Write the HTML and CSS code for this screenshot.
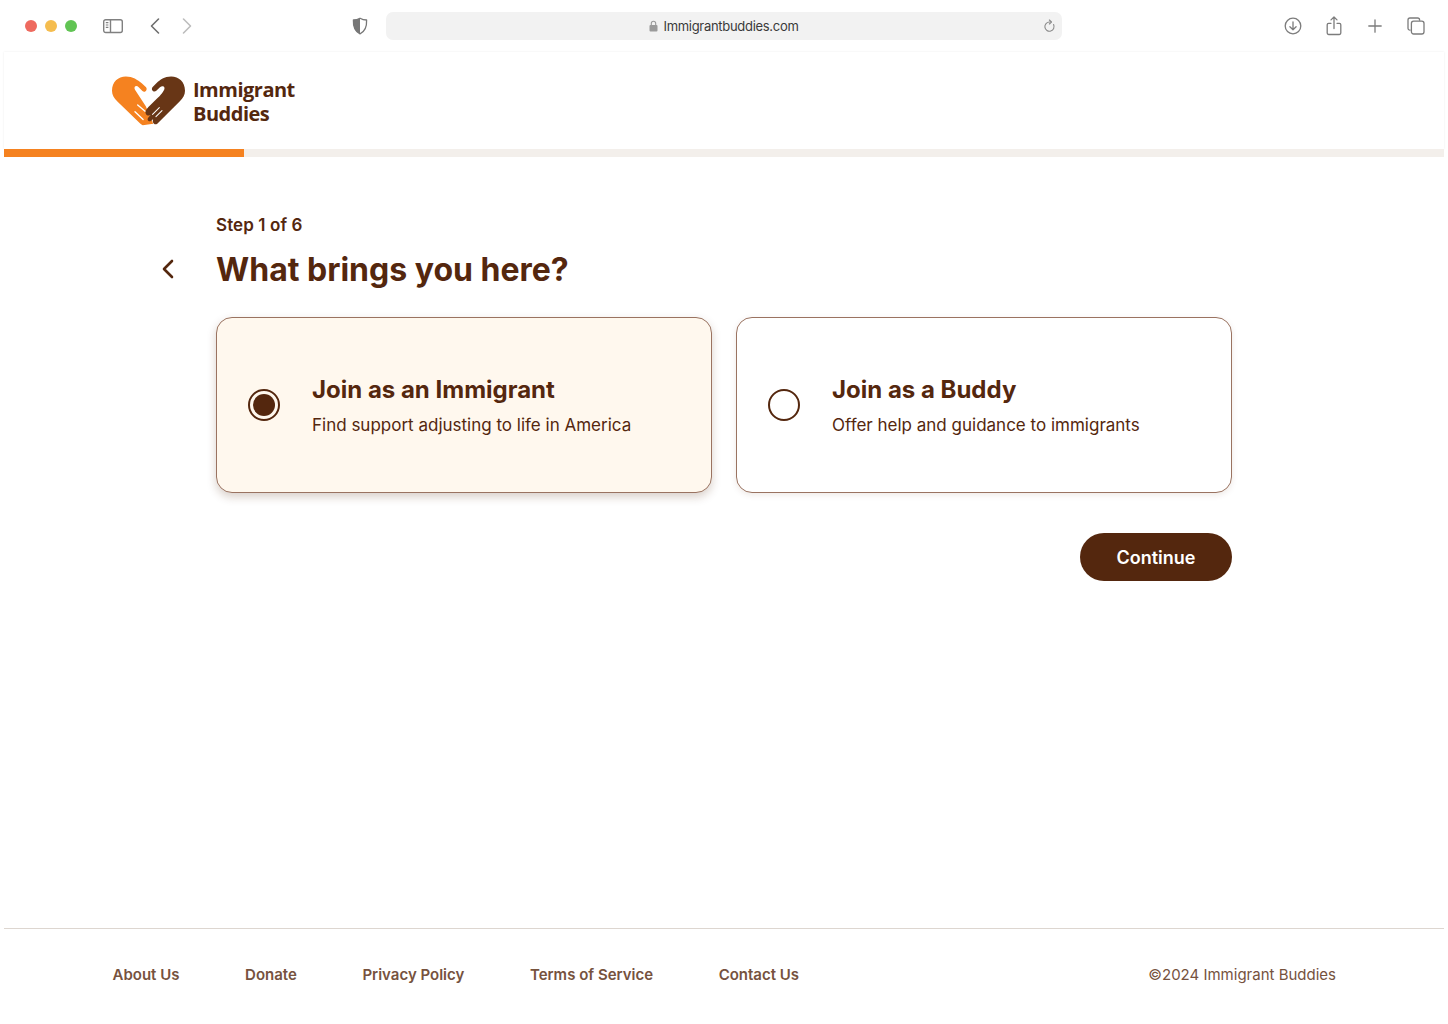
FILE: index.html
```html
<!DOCTYPE html>
<html lang="en">
<head>
  <meta charset="UTF-8">
  <title>Immigrant Buddies</title>
  <link rel="stylesheet" href="styles.css">
</head>
<body>

  <div class="browser-bar">
    <div class="traffic">
      <span class="dot dot-red"></span>
      <span class="dot dot-yellow"></span>
      <span class="dot dot-green"></span>
    </div>
    <svg class="ico ico-sidebar" width="22" height="16" viewBox="0 0 22 16" fill="none" stroke="#808080" stroke-width="1.4">
      <rect x="1.7" y="1.7" width="18.6" height="12.8" rx="2"/>
      <path d="M8.5 1.7v12.8"/>
      <path d="M3.8 4.6h2.6M3.8 7h2.6M3.8 9.4h2.6" stroke-width="1.1"/>
    </svg>
    <svg class="ico ico-back" width="12" height="18" viewBox="0 0 12 18" fill="none" stroke="#6e6e6e" stroke-width="1.6" stroke-linecap="round" stroke-linejoin="round">
      <path d="M9.5 2 L2.5 9 L9.5 16"/>
    </svg>
    <svg class="ico ico-forward" width="12" height="18" viewBox="0 0 12 18" fill="none" stroke="#bdbdbd" stroke-width="1.6" stroke-linecap="round" stroke-linejoin="round">
      <path d="M2.5 2 L9.5 9 L2.5 16"/>
    </svg>
    <svg class="ico ico-shield" width="16" height="18" viewBox="0 0 16 18">
      <path d="M8 1.2 C10 2.4 12.4 3 14.6 3 C14.9 9.5 13 14.5 8 16.8 C3 14.5 1.1 9.5 1.4 3 C3.6 3 6 2.4 8 1.2Z" fill="#fff" stroke="#777" stroke-width="1.3" stroke-linejoin="round"/>
      <path d="M8 1.2 C6 2.4 3.6 3 1.4 3 C1.1 9.5 3 14.5 8 16.8Z" fill="#777"/>
    </svg>
    <div class="url-bar">
      <svg class="url-lock" width="9" height="12" viewBox="0 0 9 12">
        <path d="M2.3 5V3.4a2.2 2.2 0 0 1 4.4 0V5" fill="none" stroke="#9a9a9a" stroke-width="1.1"/>
        <rect x="0.5" y="5" width="8" height="6.5" rx="1" fill="#9a9a9a"/>
      </svg>
      <span class="url-text">Immigrantbuddies.com</span>
      <svg class="url-reload" width="12" height="14" viewBox="0 0 12 14" fill="none" stroke="#8a8a8a" stroke-width="1.1" stroke-linecap="round" stroke-linejoin="round">
        <path d="M9.6 5.6 A4.6 4.6 0 1 1 5.6 3 H7.2"/>
        <path d="M5.4 1 L7.4 3 L5.4 5"/>
      </svg>
    </div>
    <div class="bar-actions">
      <span class="bar-btn">
        <svg width="18" height="18" viewBox="0 0 18 18" fill="none" stroke="#7c7c7c" stroke-width="1.3" stroke-linecap="round" stroke-linejoin="round">
          <circle cx="9" cy="9" r="7.8"/>
          <path d="M9 4.8v8M5.9 9.8 L9 12.8 L12.1 9.8"/>
        </svg>
      </span>
      <span class="bar-btn">
        <svg width="16" height="20" viewBox="0 0 16 20" fill="none" stroke="#7c7c7c" stroke-width="1.3" stroke-linecap="round" stroke-linejoin="round">
          <path d="M5 7.3H2.6a1.4 1.4 0 0 0-1.4 1.4v8.4a1.4 1.4 0 0 0 1.4 1.4h10.8a1.4 1.4 0 0 0 1.4-1.4V8.7a1.4 1.4 0 0 0-1.4-1.4H11"/>
          <path d="M8 12.5V1.2M5 3.9 L8 1 L11 3.9"/>
        </svg>
      </span>
      <span class="bar-btn">
        <svg width="14" height="14" viewBox="0 0 14 14" fill="none" stroke="#7c7c7c" stroke-width="1.3" stroke-linecap="round">
          <path d="M7 .8v12.4M.8 7h12.4"/>
        </svg>
      </span>
      <span class="bar-btn">
        <svg width="18" height="18" viewBox="0 0 18 18" fill="none" stroke="#7c7c7c" stroke-width="1.3" stroke-linejoin="round">
          <path d="M3.6 13.2H3a2 2 0 0 1-2-2V3a2 2 0 0 1 2-2h7.6a2 2 0 0 1 2 2v.7"/>
          <rect x="4.4" y="4.2" width="12.6" height="12.8" rx="2.2"/>
        </svg>
      </span>
    </div>
  </div>

  <div class="page">
    <header class="site-header">
      <div class="logo">
        <svg class="logo-mark" width="73" height="50" viewBox="36 35 216 147">
          <path d="M36 78 C36 52 54 36 77 36 C97 36 112 46 124 56 L136 67 C143 74 134 86 126 79 L115 68 C108 60 99 66 104 75 L136 124 L158 176 L127 180 C124 179 120 176 117 173 L52 110 C42 100 36 90 36 78Z" fill="#f58220"/>
          <path d="M112 120 L134 139 M104 140 L128 163" stroke="#fff" stroke-width="4" stroke-linecap="round" fill="none"/>
          <path d="M252 78 C252 52 234 36 211 36 C191 36 178 46 168 55 L157 66 C149 74 159 85 167 78 L178 68 C186 61 195 67 190 76 C186 84 176 96 170 100 L146 124 C140 130 133 139 136 146 C138 152 146 153 150 150 L143 158 C138 165 146 172 152 167 L158 162 C154 170 160 182 170 176 L236 110 C246 100 252 90 252 78Z" fill="#683616"/>
          <path d="M176 128 L156 148 M184 137 L166 155" stroke="#fff" stroke-width="3" stroke-linecap="round" fill="none"/>
        </svg>
        <div class="logo-text">Immigrant<br>Buddies</div>
      </div>
    </header>
    <div class="progress"><div class="progress-fill"></div></div>

    <main class="content">
      <p class="step">Step 1 of 6</p>
      <div class="title-row">
        <a class="back" href="#" aria-label="Back">
          <svg width="12" height="20" viewBox="0 0 12 20" fill="none" stroke="#54270e" stroke-width="2.6" stroke-linecap="round" stroke-linejoin="round">
            <path d="M10 2 L2 10 L10 18"/>
          </svg>
        </a>
        <h1>What brings you here?</h1>
      </div>

      <div class="options">
        <label class="option option-selected">
          <span class="radio radio-on"></span>
          <span class="option-text">
            <span class="option-title">Join as an Immigrant</span>
            <span class="option-sub">Find support adjusting to life in America</span>
          </span>
        </label>
        <label class="option">
          <span class="radio"></span>
          <span class="option-text">
            <span class="option-title">Join as a Buddy</span>
            <span class="option-sub">Offer help and guidance to immigrants</span>
          </span>
        </label>
      </div>

      <div class="actions">
        <button class="continue">Continue</button>
      </div>
    </main>

    <footer class="site-footer">
      <nav class="footer-links">
        <a href="#">About Us</a>
        <a href="#">Donate</a>
        <a href="#">Privacy Policy</a>
        <a href="#">Terms of Service</a>
        <a href="#">Contact Us</a>
      </nav>
      <span class="copyright">©2024 Immigrant Buddies</span>
    </footer>
  </div>

</body>
</html>
```

FILE: styles.css
```css
* {
  box-sizing: border-box;
}

body {
  margin: 0;
  height: 1024px;
  overflow: hidden;
  background-color: #fff;
  color: #54270e;
  font-family: Inter, sans-serif;
  display: flex;
  flex-direction: column;
}

/* browser chrome */
.browser-bar {
  height: 52px;
  flex: none;
  display: flex;
  align-items: center;
  padding-left: 25px;
}

.traffic {
  display: flex;
  gap: 8px;
  width: 77px;
}

.dot {
  width: 12px;
  height: 12px;
  border-radius: 50%;
}

.dot-red { background-color: #ee6a5f; }
.dot-yellow { background-color: #f5bd4f; }
.dot-green { background-color: #61c454; }

.ico {
  flex: none;
}

.ico-back { margin-left: 25px; }
.ico-forward { margin-left: 20px; }
.ico-shield { margin-left: 159px; }

.url-bar {
  width: 676px;
  height: 28px;
  margin-left: 18px;
  border-radius: 7px;
  background-color: #f2f2f2;
  display: flex;
  align-items: center;
  justify-content: center;
  gap: 5px;
  position: relative;
  font-size: 13px;
  letter-spacing: -0.3px;
  color: #3a3a3a;
}

.url-reload {
  position: absolute;
  right: 6px;
  top: 7px;
}

.bar-actions {
  display: flex;
  align-items: center;
  margin-left: 210px;
}

.bar-btn {
  width: 41px;
  display: flex;
  justify-content: center;
}

/* page */
.page {
  flex: 1;
  margin: 0 4px;
  display: flex;
  flex-direction: column;
}

.site-header {
  height: 97px;
  padding: 24px 0 0 108px;
  box-shadow: 0 0 2px rgba(0, 0, 0, 0.08);
}

.logo {
  display: flex;
  gap: 8px;
}

.logo-text {
  font-family: "Open Sans", sans-serif;
  font-weight: 700;
  font-size: 20px;
  letter-spacing: -0.5px;
  line-height: 24px;
  margin-top: 2px;
}

.progress {
  height: 8px;
  background-color: #f3efeb;
  position: relative;
}

.progress-fill {
  width: 240px;
  height: 100%;
  background-color: #f58220;
}

.content {
  flex: 1;
  padding: 58px 212px 0;
}

.step {
  margin: 0;
  font-size: 17px;
  font-weight: 600;
  letter-spacing: 0.1px;
  line-height: 20px;
}

.title-row {
  position: relative;
  margin-top: 15px;
}

.back {
  position: absolute;
  left: -54px;
  top: 9px;
  display: block;
  line-height: 0;
}

h1 {
  margin: 0;
  font-size: 32px;
  font-weight: 700;
  line-height: 40px;
}

.options {
  display: grid;
  grid-template-columns: 1fr 1fr;
  gap: 24px;
  margin-top: 27px;
}

.option {
  height: 176px;
  border: 1px solid #9a7361;
  border-radius: 16px;
  display: flex;
  align-items: center;
  gap: 32px;
  padding-left: 31px;
  background-color: #fff;
  box-shadow: 0 2px 6px rgba(84, 39, 14, 0.1);
}

.option-selected {
  background-color: #fff8ee;
  box-shadow: 0 4px 10px rgba(84, 39, 14, 0.22);
}

.radio {
  width: 32px;
  height: 32px;
  border: 2px solid #54270e;
  border-radius: 50%;
  flex: none;
  display: flex;
  align-items: center;
  justify-content: center;
}

.radio-on::after {
  content: "";
  width: 22px;
  height: 22px;
  border-radius: 50%;
  background-color: #54270e;
}

.option-text {
  display: flex;
  flex-direction: column;
  gap: 8px;
  padding-top: 2px;
}

.option-title {
  font-size: 24px;
  font-weight: 700;
  line-height: 30px;
}

.option-sub {
  font-size: 17px;
  line-height: 24px;
}

.actions {
  display: flex;
  justify-content: flex-end;
  margin-top: 40px;
}

.continue {
  width: 152px;
  height: 48px;
  border: 0;
  border-radius: 24px;
  background-color: #54270e;
  color: #fff;
  font-family: inherit;
  font-size: 18px;
  font-weight: 600;
}

.site-footer {
  height: 96px;
  flex: none;
  border-top: 1px solid #ddd6d0;
  display: flex;
  align-items: center;
  justify-content: space-between;
  padding: 0 108px 4px 108.5px;
  font-size: 15px;
  color: #76523e;
}

.footer-links {
  display: flex;
  gap: 65.6px;
}

.footer-links a {
  color: inherit;
  text-decoration: none;
  font-weight: 600;
}
```
